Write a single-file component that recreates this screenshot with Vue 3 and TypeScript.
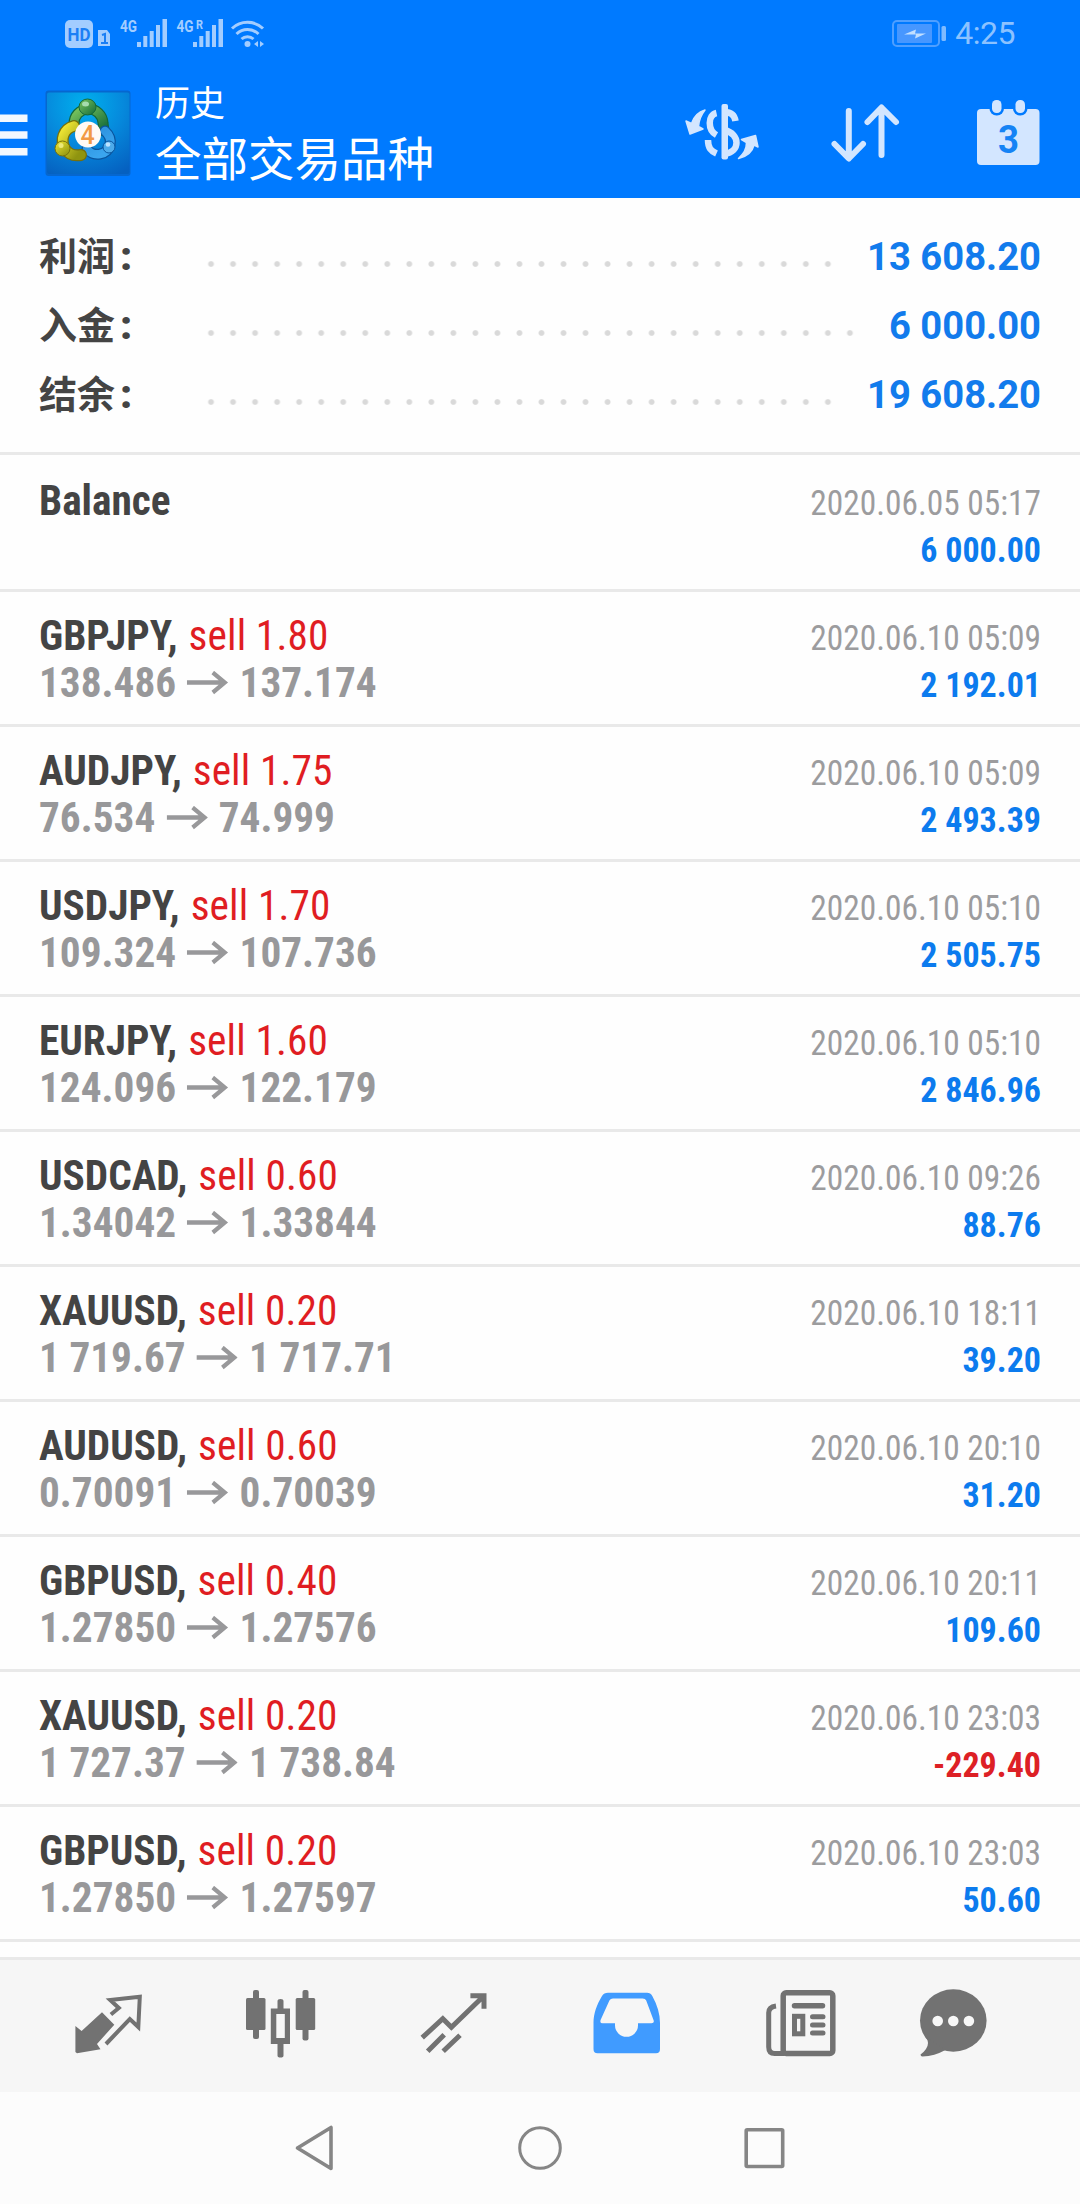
<script setup lang="ts">
interface Total {
  label: string
  value: string
}

interface Deal {
  symbol: string
  side: string
  open: string
  close: string
  time: string
  profit: string
  loss?: boolean
}

const totals: Total[] = [
  { label: '利润', value: '13 608.20' },
  { label: '入金', value: '6 000.00' },
  { label: '结余', value: '19 608.20' },
]

const deals: Deal[] = [
  { symbol: 'GBPJPY', side: 'sell 1.80', open: '138.486', close: '137.174', time: '2020.06.10 05:09', profit: '2 192.01' },
  { symbol: 'AUDJPY', side: 'sell 1.75', open: '76.534', close: '74.999', time: '2020.06.10 05:09', profit: '2 493.39' },
  { symbol: 'USDJPY', side: 'sell 1.70', open: '109.324', close: '107.736', time: '2020.06.10 05:10', profit: '2 505.75' },
  { symbol: 'EURJPY', side: 'sell 1.60', open: '124.096', close: '122.179', time: '2020.06.10 05:10', profit: '2 846.96' },
  { symbol: 'USDCAD', side: 'sell 0.60', open: '1.34042', close: '1.33844', time: '2020.06.10 09:26', profit: '88.76' },
  { symbol: 'XAUUSD', side: 'sell 0.20', open: '1 719.67', close: '1 717.71', time: '2020.06.10 18:11', profit: '39.20' },
  { symbol: 'AUDUSD', side: 'sell 0.60', open: '0.70091', close: '0.70039', time: '2020.06.10 20:10', profit: '31.20' },
  { symbol: 'GBPUSD', side: 'sell 0.40', open: '1.27850', close: '1.27576', time: '2020.06.10 20:11', profit: '109.60' },
  { symbol: 'XAUUSD', side: 'sell 0.20', open: '1 727.37', close: '1 738.84', time: '2020.06.10 23:03', profit: '-229.40', loss: true },
  { symbol: 'GBPUSD', side: 'sell 0.20', open: '1.27850', close: '1.27597', time: '2020.06.10 23:03', profit: '50.60' },
]
</script>

<template>
  <div class="screen">
    <header class="top">
      <div class="status">
        <svg class="signals" viewBox="60 12 210 42" width="210" height="42">
          <rect x="65" y="20" width="28" height="28" rx="5" fill="#a3cdff" />
          <text x="79" y="41" text-anchor="middle" textLength="23" lengthAdjust="spacingAndGlyphs" font-size="18" font-weight="700" fill="#1b7ff5">HD</text>
          <path d="M98 30h9l3 4v12H98z" fill="#a3cdff" />
          <path d="M102 35l3-1v9M101 43h7" stroke="#1b7ff5" stroke-width="2" fill="none" />
          <g fill="#a3cdff">
            <text x="120" y="32" textLength="17" lengthAdjust="spacingAndGlyphs" font-size="17" font-weight="700">4G</text>
            <path d="M137 42h4v5h-4zM143.300 36h4v11h-4zM149.700 31h4v16h-4zM156 25h4v22h-4zM162.500 19h4.500v28h-4.500z" />
            <text x="176.500" y="32" textLength="17" lengthAdjust="spacingAndGlyphs" font-size="17" font-weight="700">4G</text>
            <text x="196" y="29" textLength="7" lengthAdjust="spacingAndGlyphs" font-size="13" font-weight="700">R</text>
            <path d="M193 42h4v5h-4zM199.300 36h4v11h-4zM205.700 31h4v16h-4zM212 25h4v22h-4zM218.500 19h4.500v28h-4.500z" />
            <circle cx="247.500" cy="44" r="3" />
            <path d="M254 44l4-3v6zM264 44l-4-3v6z" />
          </g>
          <g fill="none" stroke="#a3cdff" stroke-width="3">
            <path d="M232 28.500a22.500 22.500 0 0 1 31 0M236.500 34a16 16 0 0 1 22 0M241.500 39a9 9 0 0 1 12 0" />
          </g>
        </svg>
        <div class="clock">
          <svg viewBox="892 18 56 30" width="56" height="30">
            <rect x="894" y="21" width="46" height="25" rx="4" fill="none" stroke="#4f9fff" stroke-width="2" />
            <rect x="898" y="24" width="35" height="19" rx="1" fill="#4797ff" />
            <path d="M905 34.500l12-5-1 4h11l-11 5 1-4z" fill="#c2dfff" />
            <rect x="942.500" y="26" width="4.500" height="15" rx="1.500" fill="#7fbbff" />
          </svg>
          <span>4:25</span>
        </div>
      </div>

      <div class="bar">
        <svg class="menu" viewBox="0 85 46 92" width="46" height="92">
          <path d="M0 113.500h27.500v7.500H0zM0 130.200h27.500v7.500H0zM0 147h27.500v7.500H0z" fill="#f2f8ff" />
        </svg>
        <svg class="logo" viewBox="43 85 90 92" width="90" height="92">
          <defs>
            <radialGradient id="tile" cx=".45" cy=".15" r=".95">
              <stop offset="0" stop-color="#00b0ee" />
              <stop offset=".5" stop-color="#0689dc" />
              <stop offset="1" stop-color="#0560c0" />
            </radialGradient>
            <linearGradient id="green" x2="1" y2="1">
              <stop offset="0" stop-color="#7cc75e" />
              <stop offset="1" stop-color="#12693a" />
            </linearGradient>
            <linearGradient id="yellow" x2=".8" y2="1">
              <stop offset="0" stop-color="#f3e935" />
              <stop offset="1" stop-color="#8f9410" />
            </linearGradient>
            <linearGradient id="blue" x2=".6" y2="1">
              <stop offset="0" stop-color="#2b8fdc" />
              <stop offset="1" stop-color="#3aa5ee" />
            </linearGradient>
          </defs>
          <rect x="45.500" y="89.500" width="85" height="85.500" rx="3" fill="#0667cf" />
          <rect x="47" y="91.500" width="82.500" height="81.500" rx="2" fill="url(#tile)" />
          <g fill="none" stroke-linecap="round">
            <path d="M74 123a14 14 0 0 1 29-1l1 8" stroke="#14683a" stroke-width="11" />
            <path d="M74 123a14 14 0 0 1 29-1l1 8" stroke="url(#green)" stroke-width="8.500" />
            <path d="M105 130c9 8 6 21-5 23-7 1-10-1-13-5" stroke="#0a559e" stroke-width="11" />
            <path d="M105 130c9 8 6 21-5 23-7 1-10-1-13-5" stroke="url(#blue)" stroke-width="8.500" />
            <path d="M74 125c-11 3-14 14-9 23 4 6 10 7 16 6" stroke="#77700a" stroke-width="12" />
            <path d="M74 125c-11 3-14 14-9 23 4 6 10 7 16 6" stroke="url(#yellow)" stroke-width="9.500" />
          </g>
          <ellipse cx="87.500" cy="106" rx="8.500" ry="8" fill="url(#green)" stroke="#14683a" />
          <circle cx="62.500" cy="147.500" r="7.500" fill="url(#yellow)" stroke="#77700a" />
          <circle cx="109" cy="146" r="6" fill="#4dabea" stroke="#0a559e" />
          <ellipse cx="85.500" cy="103" rx="3.500" ry="2.500" fill="#a6dcae" />
          <circle cx="61" cy="144.500" r="2.500" fill="#ece878" />
          <circle cx="108" cy="143.500" r="2.300" fill="#bfe4ff" />
          <circle cx="88" cy="133.500" r="13" fill="#fffaf5" />
          <text x="87.500" y="142.500" text-anchor="middle" font-size="25" font-weight="500" fill="#f29a45">4</text>
        </svg>
        <div class="titles">
          <div class="title">历史</div>
          <div class="subtitle">全部交易品种</div>
        </div>
        <svg class="action" viewBox="680 95 90 72" width="90" height="72">
          <g fill="none" stroke="#d3e6ff" stroke-width="6.500">
            <path d="M716.500 112c-9 2-9 17 0 22M708 139c0 8 3 11 8.500 13.500" />
            <path d="M724.500 111c6 0 10 3 11 9M724.500 129c16 4 16 22 0 24" />
          </g>
          <rect x="721.500" y="103" width="6.500" height="55.500" rx="2" fill="#d3e6ff" />
          <path d="M705 109c-7 2-11 6-13.500 13.500l-5.500-2.500 4 13 13-5-4.500-2.500c.5-7 2.500-11.500 6.500-16.500z" fill="#d3e6ff" stroke="#d3e6ff" stroke-width="1.500" stroke-linejoin="round" />
          <path d="M738.500 157.500c8-2 14-7 15.500-13.500l4 2-2.500-11.500-14 4 5 3c0 7-3 11-8 16z" fill="#d3e6ff" stroke="#d3e6ff" stroke-width="1.500" stroke-linejoin="round" />
        </svg>
        <svg class="action" viewBox="820 95 90 72" width="90" height="72">
          <path d="M848.800 110v47M834.500 143l14.300 14.500L863 143M881.500 154v-47M867.500 121l14-14.500L896 121" fill="none" stroke="#d3e6ff" stroke-width="6" stroke-linecap="round" stroke-linejoin="round" />
        </svg>
        <svg class="action" viewBox="965 95 90 72" width="90" height="72">
          <rect x="977" y="108" width="62.500" height="56" rx="4" fill="#d3e6ff" />
          <rect x="989.500" y="95" width="14.500" height="19.500" rx="7" fill="#007aff" />
          <rect x="1013" y="95" width="14.500" height="19.500" rx="7" fill="#007aff" />
          <rect x="992" y="99" width="9.500" height="13" rx="4.500" fill="#d3e6ff" />
          <rect x="1015.500" y="99" width="9.500" height="13" rx="4.500" fill="#d3e6ff" />
          <text x="1008.500" y="151.500" text-anchor="middle" textLength="21" lengthAdjust="spacingAndGlyphs" font-size="38.500" font-weight="700" fill="#1583f5">3</text>
        </svg>
      </div>
    </header>

    <section class="totals">
      <div v-for="t in totals" :key="t.label" class="total">
        <span class="total-label">{{ t.label }}<i class="colon">:</i></span>
        <span class="dots"></span>
        <span class="total-value">{{ t.value }}</span>
      </div>
    </section>

    <main class="list">
      <div class="row first">
        <div class="left"><div><b>Balance</b></div></div>
        <div class="right">
          <div class="time">2020.06.05 05:17</div>
          <div class="profit">6 000.00</div>
        </div>
      </div>
      <div v-for="(d, i) in deals" :key="i" class="row">
        <div class="left">
          <div><b>{{ d.symbol }},</b> <span class="side">{{ d.side }}</span></div>
          <div class="prices">
            <span>{{ d.open }}</span>
            <svg viewBox="0 0 43 24" width="43" height="24"><path d="M0 11.500h39.500M27 1.500L39.500 11.500L27 21.500" fill="none" stroke="#98989a" stroke-width="4.300" /></svg>
            <span>{{ d.close }}</span>
          </div>
        </div>
        <div class="right">
          <div class="time">{{ d.time }}</div>
          <div class="profit" :class="{ loss: d.loss }">{{ d.profit }}</div>
        </div>
      </div>
    </main>

    <nav class="tabs">
      <svg viewBox="22 1960 173 132">
        <path d="M75.400 2026l6.200 5L102 2012.300l12.300 12.400L97 2044l3.500 5.300-23.500 4-1.600-1.300z" fill="#727272" />
        <path d="M110.900 2014.500l7.900-6.500-8.600-8 29.600-3.200-1.500 30.200-8.500-8L106 2044" fill="none" stroke="#727272" stroke-width="4" />
      </svg>
      <svg viewBox="195 1960 173 132">
        <g fill="#727272">
          <rect x="246" y="1998" width="19.500" height="32" rx="1.500" /><rect x="253" y="1990" width="6" height="49" rx="2" />
          <rect x="295.700" y="1998" width="19.500" height="32" rx="1.500" /><rect x="302.500" y="1990" width="6" height="50.500" rx="2" />
          <path d="M270.800 2008.500h6.700V2001q0-2 3-2t3 2v7.500h6.500V2044h-6.500v11.500q0 2-3 2t-3-2V2044h-6.700zM276.300 2014v24h8.500v-24z" fill-rule="evenodd" />
        </g>
      </svg>
      <svg viewBox="368 1960 173 132">
        <path d="M422.200 2037.700l20.600-19 8.600 8.600 30-29M470.400 1995.700H484v13M427.700 2051.300l16.500-16.500M443.200 2051.300l16.800-16" fill="none" stroke="#727272" stroke-width="5" />
      </svg>
      <svg viewBox="541 1960 173 132">
        <path d="M608 1992.700h39q3.500 0 5.300 3.300c5 9 7.700 18 7.700 27v26q0 4.300-4 4.300h-58.500q-4 0-4-4.300v-26c0-9 3-18 8.500-27q2-3.300 6-3.300zM613 1998.500q-2.500 0-3.600 2l-8.800 19.500q-1 3.300 2 3.300H615v2a11.500 11.500 0 0 0 23 0v-2h13.500q3.200 0 2-3.300l-7.300-19.500q-.9-2-3.500-2z" fill="#409bff" fill-rule="evenodd" />
      </svg>
      <svg viewBox="714 1960 173 132">
        <g fill="none" stroke="#727272" stroke-width="5.500">
          <rect x="783.200" y="1992.700" width="49.600" height="60.800" rx="3" />
          <path d="M776 2006q-7.500 1-7.300 7v34q0 6.500 6 6.500h10" stroke-width="5" />
          <path d="M794.500 2005.700h28" stroke-linecap="round" stroke-width="5.500" />
          <rect x="794.500" y="2016.300" width="8.300" height="17.500" stroke-width="5" />
          <path d="M812.500 2016.700h10.500M812.500 2025h10.500M812.500 2033h10.500" stroke-linecap="round" stroke-width="5" />
        </g>
      </svg>
      <svg viewBox="887 1960 173 132">
        <ellipse cx="953.300" cy="2020.500" rx="33.300" ry="31.200" fill="#727272" />
        <path d="M926 2037q4 6 0 12-2 3-5.500 5.500 0 2 2 2 12-.5 23-6.500z" fill="#727272" />
        <g fill="#f7f7f7"><circle cx="937.700" cy="2021" r="5.300" /><circle cx="953.300" cy="2021" r="5.300" /><circle cx="968.900" cy="2021" r="5.300" /></g>
      </svg>
    </nav>

    <footer class="system">
      <svg viewBox="280 2112 520 72" width="520" height="72">
        <g fill="none" stroke="#868686" stroke-width="3.600" stroke-linejoin="round">
          <path d="M297.500 2148l33.500-20.500v41z" />
          <circle cx="540" cy="2148" r="20.300" stroke-width="3" />
          <rect x="746.200" y="2129.700" width="36.500" height="36.800" rx="1" />
        </g>
      </svg>
    </footer>
  </div>
</template>

<style>
body {
  margin: 0;
}
</style>

<style scoped>
.screen {
  width: 1080px;
  height: 2204px;
  display: flex;
  flex-direction: column;
  overflow: hidden;
  background: #fefefe;
  font-family: Roboto, "Noto Sans CJK SC", sans-serif;
}
svg {
  display: block;
  flex: none;
}
.top {
  height: 198px;
  background: #007aff;
  flex: none;
}
.status {
  height: 66px;
  display: flex;
  justify-content: space-between;
  box-sizing: border-box;
  padding: 12px 65px 0 60px;
}
.clock {
  display: flex;
  height: 42px;
  align-items: center;
  gap: 8px;
  color: #8cc2ff;
  font-size: 32px;
  letter-spacing: -0.5px;
}
.bar {
  display: flex;
  height: 132px;
  align-items: center;
}
.logo {
  margin-left: -3px;
}
.titles {
  margin-left: 22px;
  padding-bottom: 3px;
  width: 525px;
  color: #fff;
  font-family: "Noto Sans CJK SC", sans-serif;
}
.title {
  font-size: 35px;
  line-height: 50px;
}
.subtitle {
  font-size: 46.500px;
  line-height: 59px;
}
.action + .action {
  margin-left: 50px;
}
.action:last-child {
  margin-left: 55px;
}
.totals {
  box-sizing: border-box;
  height: 257px;
  padding: 24px 39px 0;
  border-bottom: 3px solid #e9e9e9;
  flex: none;
}
.total {
  display: flex;
  height: 69px;
  line-height: 69px;
  font-weight: 700;
}
.total-label {
  width: 161px;
  font-size: 38px;
  color: #444;
}
.colon {
  font-style: normal;
  font-weight: 900;
  font-size: 41px;
  margin-left: 5px;
}
.dots {
  flex: 1;
  height: 8px;
  margin: 37.500px 24px 0 0;
  background: radial-gradient(circle, #d9d9d9 2.300px, transparent 3.400px) 0 0 / 22.040px 8px repeat-x;
}
.total-value {
  font-size: 38.200px;
  line-height: 71px;
  color: #127bec;
}
.list {
  height: 1502px;
  flex: none;
  font-stretch: 75%;
  font-family: "Roboto Condensed", Roboto, sans-serif;
}
.row {
  box-sizing: border-box;
  height: 135px;
  padding: 20px 39px 0 38.500px;
  border-bottom: 3px solid #e9e9e9;
  display: flex;
  justify-content: space-between;
  line-height: 47px;
  white-space: nowrap;
}
.first {
  height: 137px;
  padding-top: 22px;
}
.left {
  font-size: 43px;
  color: #444;
  transform: scaleX(0.96);
  transform-origin: 0 0;
}
.side {
  margin-left: 1.500px;
  letter-spacing: 0.150px;
  color: #e01d22;
}
.prices {
  display: flex;
  align-items: center;
  gap: 11.500px;
  color: #98989a;
  font-weight: 700;
}
.right {
  padding-top: 3px;
  text-align: right;
  font-size: 35px;
}
.time {
  color: #9c9c9e;
  transform: scaleX(0.953);
  transform-origin: 100% 0;
}
.profit {
  color: #0c7bee;
  font-weight: 700;
  transform: scaleX(0.971);
  transform-origin: 100% 0;
}
.loss {
  color: #dd2025;
}
.tabs {
  box-sizing: border-box;
  height: 135px;
  border-top: 3px solid #e9e9e9;
  background: #f6f6f6;
  padding-left: 22px;
  display: flex;
  flex: none;
}
.tabs svg {
  width: 173px;
  height: 132px;
}
.system {
  flex: 1;
  background: #fcfcfc;
  display: flex;
  justify-content: center;
  padding-top: 20px;
}
</style>
